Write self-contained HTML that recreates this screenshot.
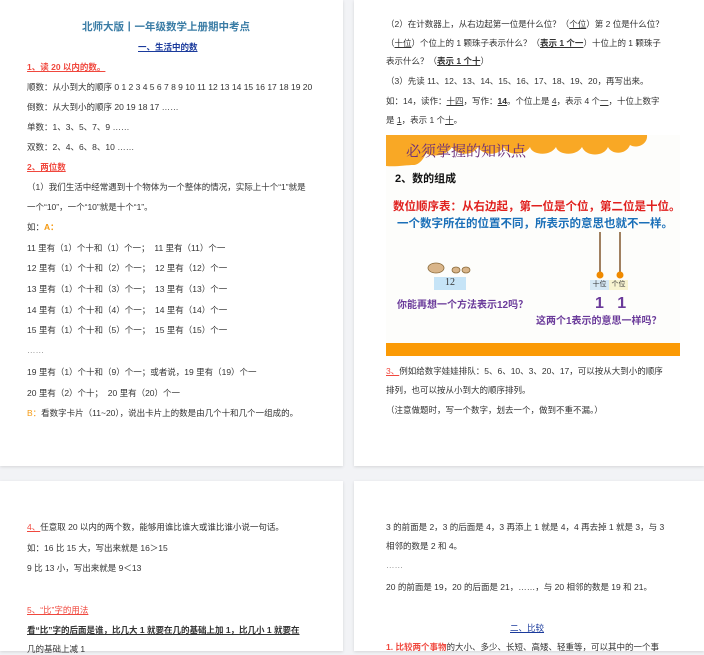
<!DOCTYPE html>
<html><head><meta charset="utf-8">
<style>
*{margin:0;padding:0;box-sizing:border-box}
body{width:704px;height:649px;background:#f2f3f6;position:relative;overflow:hidden;font-family:"Liberation Sans","Noto Sans CJK SC",sans-serif;color:#333;font-size:8.5px}
.pg{position:absolute;background:#fff;box-shadow:0 1px 3px rgba(0,0,0,.12)}
.t{position:absolute;white-space:nowrap;line-height:12px}
.r{color:#f0483e}
.o{color:#f59a12}
.u{text-decoration:underline}
.b{font-weight:bold}
</style></head><body>
<div class="pg" style="left:0;top:0;width:343px;height:466px"></div>
<div class="pg" style="left:354px;top:0;width:350px;height:466px"></div>
<div class="pg" style="left:0;top:481px;width:343px;height:170px"></div>
<div class="pg" style="left:354px;top:481px;width:350px;height:170px"></div>

<!-- page 1 -->
<div class="t b" style="left:82px;top:21px;font-size:10.5px;color:#3a7ca5">北师大版丨一年级数学上册期中考点</div>
<div class="t b u" style="left:138px;top:41px;color:#1a3a9c">一、生活中的数</div>
<div class="t b u r" style="left:27px;top:61px">1、读 20 以内的数。</div>
<div class="t" style="left:27px;top:81px">顺数：从小到大的顺序 0 1 2 3 4 5 6 7 8 9 10 11 12 13 14 15 16 17 18 19 20</div>
<div class="t" style="left:27px;top:101px">倒数：从大到小的顺序 20 19 18 17 ……</div>
<div class="t" style="left:27px;top:121px">单数：1、3、5、7、9 ……</div>
<div class="t" style="left:27px;top:141px">双数：2、4、6、8、10 ……</div>
<div class="t b u r" style="left:27px;top:161px">2、两位数</div>
<div class="t" style="left:27px;top:181px">（1）我们生活中经常遇到十个物体为一个整体的情况，实际上十个“1”就是</div>
<div class="t" style="left:27px;top:201px">一个“10”，一个“10”就是十个“1”。</div>
<div class="t" style="left:27px;top:221px">如：<span class="o b">A：</span></div>
<div class="t" style="left:27px;top:242px">11 里有（1）个十和（1）个一；&nbsp; 11 里有（11）个一</div>
<div class="t" style="left:27px;top:262px">12 里有（1）个十和（2）个一；&nbsp; 12 里有（12）个一</div>
<div class="t" style="left:27px;top:283px">13 里有（1）个十和（3）个一；&nbsp; 13 里有（13）个一</div>
<div class="t" style="left:27px;top:304px">14 里有（1）个十和（4）个一；&nbsp; 14 里有（14）个一</div>
<div class="t" style="left:27px;top:324px">15 里有（1）个十和（5）个一；&nbsp; 15 里有（15）个一</div>
<div class="t" style="left:27px;top:344px;color:#888">……</div>
<div class="t" style="left:27px;top:366px">19 里有（1）个十和（9）个一；或者说，19 里有（19）个一</div>
<div class="t" style="left:27px;top:387px">20 里有（2）个十；&nbsp; 20 里有（20）个一</div>
<div class="t" style="left:27px;top:407px"><span class="o">B：</span>看数字卡片（11~20），说出卡片上的数是由几个十和几个一组成的。</div>

<!-- page 2 -->
<div class="t" style="left:386px;top:18px">（2）在计数器上，从右边起第一位是什么位？（<span class="u">个位</span>）第 2 位是什么位？</div>
<div class="t" style="left:386px;top:37px">（<span class="u">十位</span>）个位上的 1 颗珠子表示什么？（<span class="u b">表示 1 个一</span>）十位上的 1 颗珠子</div>
<div class="t" style="left:386px;top:55px">表示什么？（<span class="u b">表示 1 个十</span>）</div>
<div class="t" style="left:386px;top:75px">（3）先读 11、12、13、14、15、16、17、18、19、20，再写出来。</div>
<div class="t" style="left:386px;top:95px">如：14，读作：<span class="u">十四</span>，写作：<span class="u b">14</span>。个位上是 <span class="u">4</span>，表示 4 个<span class="u">一</span>，十位上数字</div>
<div class="t" style="left:386px;top:114px">是 <span class="u">1</span>，表示 1 个<span class="u">十</span>。</div>

<div style="position:absolute;left:386px;top:135px;width:294px;height:208px;background:#fdfdfb;overflow:hidden">
 <svg width="294" height="208" style="position:absolute;left:0;top:0">
  <path d="M0 0 H261 C262 10 250 14 244 10 C240 20 226 20 222 12 C218 22 200 22 196 12 C190 22 172 20 170 12 C164 22 146 20 144 12 C138 22 120 20 118 12 C112 22 96 20 92 12 C86 22 70 20 66 12 C60 22 44 22 40 18 C36 28 30 30 28 30 C20 30 10 32 0 31 Z" fill="#f9a825"/>
  <g fill="#d9b58a" stroke="#8a6a3a" stroke-width=".8">
   <ellipse cx="50" cy="133" rx="8" ry="5"/><ellipse cx="70" cy="135" rx="4" ry="3"/><ellipse cx="80" cy="135" rx="4" ry="3"/>
  </g>
  <rect x="213" y="97" width="2" height="43" fill="#a08060"/>
  <rect x="233" y="97" width="2" height="43" fill="#a08060"/>
  <circle cx="214" cy="140" r="3.5" fill="#f08a00"/><circle cx="234" cy="140" r="3.5" fill="#f08a00"/>
 </svg>
 <div class="t" style="left:20px;top:6px;font-size:15px;line-height:20px;color:#6a2d7a;font-family:'Noto Serif CJK SC',serif">必须掌握的知识点</div>
 <div class="t b" style="left:9px;top:38px;font-size:11px;color:#111">2、数的组成</div>
 <div class="t b" style="left:7px;top:66px;font-size:11.5px;color:#e0201e">数位顺序表：从右边起，第一位是个位，第二位是十位。</div>
 <div class="t b" style="left:11px;top:83px;font-size:11.5px;color:#1a6fb8">一个数字所在的位置不同，所表示的意思也就不一样。</div>
 <div class="t" style="left:48px;top:142px;width:32px;height:13px;background:#c6e4f7;text-align:center;font-family:'Liberation Serif',serif;font-size:10px">12</div>
 <div class="t b" style="left:11px;top:165px;font-size:10px;color:#6a3a9a">你能再想一个方法表示12吗？</div>
 <div class="t" style="left:204px;top:145px;width:19px;height:10px;background:#d6e8f5;font-size:7px;line-height:10px;text-align:center">十位</div>
 <div class="t" style="left:223px;top:145px;width:19px;height:10px;background:#f8f3d0;font-size:7px;line-height:10px;text-align:center">个位</div>
 <div class="t b" style="left:209px;top:160px;font-size:16px;line-height:18px;color:#6a3a9a">1&nbsp;&nbsp;&nbsp;1</div>
 <div class="t b" style="left:150px;top:181px;font-size:10px;color:#6a3a9a">这两个1表示的意思一样吗？</div>
</div>
<div style="position:absolute;left:386px;top:343px;width:294px;height:13px;background:#fb9a05"></div>

<div class="t" style="left:386px;top:365px"><span class="r u">3、</span>例如给数字娃娃排队：5、6、10、3、20、17，可以按从大到小的顺序</div>
<div class="t" style="left:386px;top:384px">排列，也可以按从小到大的顺序排列。</div>
<div class="t" style="left:386px;top:404px">（注意做题时，写一个数字，划去一个，做到不重不漏。）</div>

<!-- page 3 -->
<div class="t" style="left:27px;top:521px"><span class="r u">4、</span>任意取 20 以内的两个数，能够用谁比谁大或谁比谁小说一句话。</div>
<div class="t" style="left:27px;top:542px">如：16 比 15 大，写出来就是 16＞15</div>
<div class="t" style="left:27px;top:562px">9 比 13 小，写出来就是 9＜13</div>
<div class="t r u" style="left:27px;top:604px">5、“比”字的用法</div>
<div class="t b u" style="left:27px;top:624px">看“比”字的后面是谁，比几大 1 就要在几的基础上加 1，比几小 1 就要在</div>
<div class="t" style="left:27px;top:643px">几的基础上减 1</div>

<!-- page 4 -->
<div class="t" style="left:386px;top:521px">3 的前面是 2，3 的后面是 4，3 再添上 1 就是 4，4 再去掉 1 就是 3，与 3</div>
<div class="t" style="left:386px;top:540px">相邻的数是 2 和 4。</div>
<div class="t" style="left:386px;top:559px;color:#888">……</div>
<div class="t" style="left:386px;top:581px">20 的前面是 19，20 的后面是 21，……，与 20 相邻的数是 19 和 21。</div>
<div class="t u" style="left:510px;top:622px;color:#1a3a9c">二、比较</div>
<div class="t" style="left:386px;top:641px"><span class="r b">1. 比较两个事物</span>的大小、多少、长短、高矮、轻重等，可以其中的一个事</div>
</body></html>
